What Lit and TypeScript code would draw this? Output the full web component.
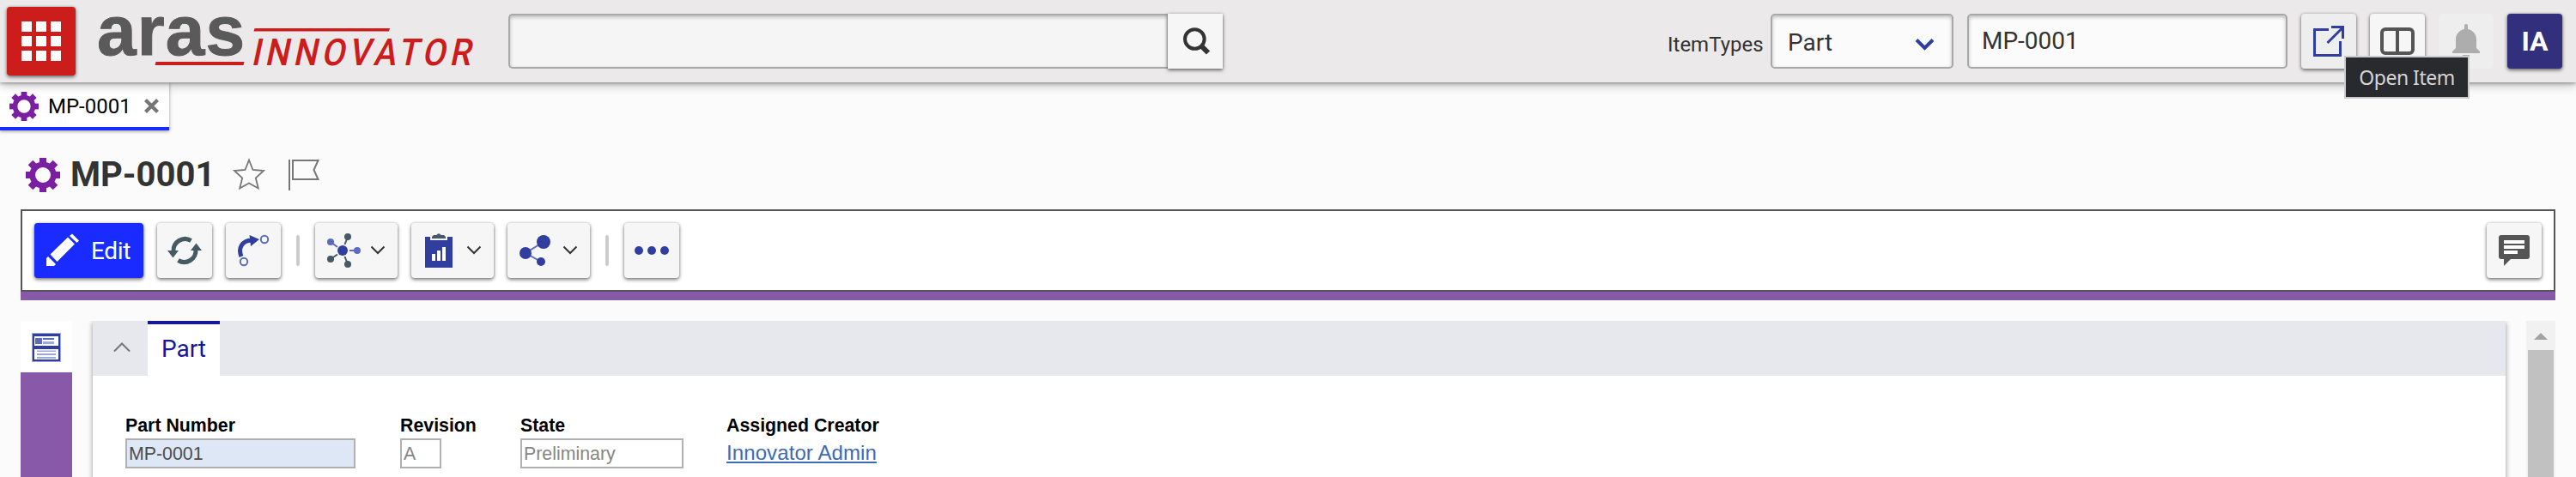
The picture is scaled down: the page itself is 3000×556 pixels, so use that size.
import { LitElement, html, css, svg } from "lit";
import { customElement } from "lit/decorators.js";

const gear = (size: number) => html`<svg width=${size} height=${size} viewBox="-20 -20 40 40">
  <g fill="#7b1fa2">
    ${[0, 45, 90, 135, 180, 225, 270, 315].map(
      (a) => svg`<rect x="-4" y=${a % 90 ? -20.5 : -20} width="8" height="10" transform="rotate(${a})"></rect>`
    )}
  </g>
  <circle r="12.3" fill="none" stroke="#7b1fa2" stroke-width="6.6"></circle>
</svg>`;

const chevron = svg`<path d="M65.5 27.5 73 35 80.5 27.5" fill="none" stroke="#333" stroke-width="2"></path>`;

@customElement("app-root")
export class AppRoot extends LitElement {
  static styles = css`
    :host {
      display: block;
      width: 3000px;
      height: 556px;
      overflow: hidden;
      background: #fbfbfb;
      font-family: Roboto, "Liberation Sans", sans-serif;
      color: #333;
    }
    * { box-sizing: border-box; }
    svg { display: block; flex: none; }
    .header {
      position: relative;
      z-index: 1;
      display: flex;
      align-items: center;
      height: 96px;
      padding: 0 16px 0 8px;
      background: #ebe9ea;
      box-shadow: 0 1px 4px rgba(0, 0, 0, 0.35), 0 2px 12px rgba(0, 0, 0, 0.3);
    }
    .btn {
      flex: none;
      height: 64px;
      border-radius: 4px;
      background: #f6f6f6;
      box-shadow: 0 2px 4px rgba(0, 0, 0, 0.5), 0 0 3px rgba(0, 0, 0, 0.22);
    }
    .menu {
      width: 80px;
      height: 80px;
      background: #cc1c1c;
    }
    .logo { margin-left: 20px; overflow: visible; }
    .field {
      height: 64px;
      border: 2px solid #a8a8a8;
      border-radius: 5px;
      background: #fbfbfb;
      box-shadow: inset 0 2px 4px rgba(0, 0, 0, 0.25);
      font-size: 28px;
      line-height: 60px;
    }
    .search {
      width: 768px;
      margin-left: 34px;
      border-right: 0;
      border-radius: 5px 0 0 5px;
      background: #f5f5f5;
    }
    .find { border-radius: 0; }
    .itemtypes {
      margin-left: auto;
      width: 120px;
      padding-top: 8px;
      font-size: 24px;
      line-height: 28px;
    }
    .select {
      display: flex;
      justify-content: space-between;
      width: 213px;
      padding: 2px 18px 0 18px;
    }
    .item {
      width: 373px;
      margin: 0 16px;
      padding-left: 15px;
    }
    .actions { display: flex; gap: 16px; }
    .open { background: #eeeeee; }
    .bell { background: #eeeeee; box-shadow: none; }
    .user {
      width: 64px;
      background: #32307c;
      color: #fff;
      font-weight: 700;
      font-size: 32px;
      line-height: 64px;
      text-align: center;
    }
    .tooltip {
      position: absolute;
      left: 2730px;
      top: 65px;
      width: 146px;
      height: 50px;
      border: 2px solid #cccbcf;
      background: #292a2d;
      color: #d5d5d5;
      font: 23px/46px "Noto Sans", sans-serif;
      letter-spacing: -0.5px;
      text-align: center;
      white-space: nowrap;
    }
    .tab {
      display: flex;
      align-items: center;
      width: 197px;
      height: 56px;
      padding: 0 11px;
      border-bottom: 4px solid #1a2bff;
      background: #fff;
      box-shadow: 0 1px 4px rgba(0, 0, 0, 0.4);
    }
    .tab-icon { padding-top: 4px; }
    .tab-text {
      width: 112px;
      margin-left: 11px;
      padding-top: 4px;
      font-size: 24px;
      line-height: 28px;
      color: #000;
    }
    .title {
      display: flex;
      align-items: center;
      height: 92px;
      padding: 12px 30px 0;
    }
    h1 {
      width: 187px;
      margin: 0 0 0 12px;
      font-size: 40px;
      line-height: 80px;
      font-weight: 700;
    }
    .toolbar {
      display: flex;
      align-items: center;
      gap: 16px;
      height: 96px;
      margin: 0 24px;
      padding: 0 14px;
      border: 2px solid #555;
      background: #fff;
    }
    .stripe { height: 10px; margin: 0 24px; background: #8858a9; }
    .edit {
      display: flex;
      width: 127px;
      background: #1a2bff;
      color: #fff;
      font-size: 28px;
      line-height: 65px;
      letter-spacing: -0.3px;
    }
    .sep {
      width: 4px;
      height: 36px;
      margin: 0 2px;
      border-radius: 2px;
      background: #ccc;
    }
    .comment { margin-left: auto; }
    .body {
      display: flex;
      height: 182px;
      margin: 24px 24px 0;
    }
    .side { width: 60px; background: #8858a9; }
    .side-item { display: flex; height: 60px; padding: 14px 13px; background: #fff; }
    .clip { flex: 1; padding: 0 24px; overflow: hidden; }
    .panel {
      height: 190px;
      background: #fff;
      box-shadow: 0 2px 6px rgba(0, 0, 0, 0.4);
    }
    .panel-head { display: flex; height: 64px; background: #e7e8ed; }
    .panel-tab {
      width: 84px;
      border-top: 4px solid #17179b;
      background: #fff;
      color: #17179b;
      font-size: 28px;
      line-height: 57px;
      text-align: center;
    }
    .form {
      display: flex;
      align-items: flex-start;
      padding: 45px 38px 0;
      font: 21.33px/24px "Liberation Sans", Arial, sans-serif;
    }
    .label { height: 28px; padding-top: 1px; font-weight: 700; color: #000; white-space: nowrap; }
    .value {
      height: 35px;
      padding-left: 2px;
      border: 2px solid #b0b0b0;
      color: #868686;
      line-height: 32px;
    }
    .number { width: 268px; margin-right: 52px; }
    .number .value { background: #dde7f5; color: #4c4c4c; }
    .revision { width: 48px; margin-right: 92px; }
    .state { width: 190px; margin-right: 50px; }
    .link {
      display: inline-block;
      font-size: 24px;
      line-height: 33px;
      letter-spacing: 0.1px;
      color: #3c6ab8;
      text-decoration: underline;
      text-decoration-thickness: 2px;
      text-underline-offset: 2px;
    }
    .scroll {
      display: flex;
      flex-direction: column;
      width: 34px;
      padding: 0 2px;
      background: #f1f1f1;
    }
    .thumb { flex: 1; background: #c1c1c1; }
  `;

  render() {
    return html`
      <div class="header">
        <div class="btn menu">
          <svg width="80" height="80" fill="#fff">
            ${[17, 34, 51].map((y) => [17, 34, 51].map((x) => svg`<rect x=${x} y=${y} width="12" height="12"></rect>`))}
          </svg>
        </div>
        <svg class="logo" width="450" height="96">
          <text x="5" y="63.500" font-family="Liberation Sans" font-weight="700" font-size="82" fill="#5a5a5a" stroke="#5a5a5a" textLength="172">aras</text>
          <path d="M73.500 72H176.500L175.500 76H72.500ZM188.500 33H346L345 36.500H187.500Z" fill="#cc1c1c"></path>
          <text transform="translate(184 76) skewX(-12) scale(.9 1)" x="0" y="0" font-family="Roboto" font-weight="500" font-size="43.500" letter-spacing="5.600" fill="#cc1c1c">INNOVATOR</text>
        </svg>
        <div class="field search"></div>
        <div class="btn find">
          <svg width="64" height="64">
            <circle cx="31.300" cy="29.500" r="11.300" fill="none" stroke="#333" stroke-width="4"></circle>
            <path d="M39 37.500 47 45.500" stroke="#333" stroke-width="6"></path>
          </svg>
        </div>
        <div class="itemtypes">ItemTypes</div>
        <div class="field select">
          <span>Part</span>
          <svg width="26" height="58"><path d="M3 26.500 12.500 36 22 26.500" fill="none" stroke="#303f9f" stroke-width="4"></path></svg>
        </div>
        <div class="field item">MP-0001</div>
        <div class="actions">
          <div class="btn open">
            <svg width="64" height="64" fill="none" stroke="#303f9f" stroke-width="3">
              <path d="M32 18.500H15.500V48.500H45.500V32M35 15.500H48.500V29"></path>
              <path d="M30.500 34 48 16.500"></path>
            </svg>
          </div>
          <div class="btn">
            <svg width="64" height="64" fill="none" stroke="#555" stroke-width="4">
              <rect x="14" y="18" width="36" height="28" rx="4"></rect>
              <path d="M32 18V46"></path>
            </svg>
          </div>
          <div class="btn bell">
            <svg width="64" height="64" fill="#adadad">
              <path d="M30 14a2 2 0 0 1 4 0V18C40 19 44 24 44 30V40L48 44V46H16V44L20 40V30C20 24 24 19 30 18ZM28 48H36A4 4 0 0 1 28 48Z"></path>
            </svg>
          </div>
          <div class="btn user">IA</div>
        </div>
        <div class="tooltip">Open Item</div>
      </div>

      <div class="tab">
        <div class="tab-icon">${gear(34)}</div>
        <div class="tab-text">MP-0001</div>
        <svg width="20" height="24"><path d="M3.500 6.500 17.500 20.500M17.500 6.500 3.500 20.500" stroke="#767676" stroke-width="4.200"></path></svg>
      </div>

      <div class="title">
        ${gear(40)}
        <h1>MP-0001</h1>
        <svg width="120" height="60" fill="none" stroke="#777" stroke-width="1.800">
          <path d="M21 12.500 25.500 24 38 25 28.800 33.500 31.800 45.500 21 39.500 10.200 45.500 13.200 33.500 4 25 16.500 24Z"></path>
          <path d="M68 12V48" stroke-width="2"></path>
          <path d="M72 13H101.500L96.500 24 101.500 35H72Z" stroke-width="2"></path>
        </svg>
      </div>

      <div class="toolbar">
        <div class="btn edit">
          <svg width="66" height="64" fill="#fff">
            <path d="M18.500 36.500 39 16.500 47 24.500 26.500 45ZM41 15 44 12.500 52 20.500 49.500 23Z"></path>
            <path d="M14 50V41L16 39 25 48 23 50Z"></path>
          </svg>
          <span>Edit</span>
        </div>
        <div class="btn">
          <svg width="64" height="64" fill="none" stroke="#455a64" stroke-width="5">
            <path d="M39.500 20.500A13.500 13.500 0 0 0 19 33"></path>
            <path d="M24.500 43.500A13.500 13.500 0 0 0 45 31"></path>
            <path d="M12 32H25L18.500 40.500ZM39 32H52L45.500 23.500Z" fill="#455a64" stroke="none"></path>
          </svg>
        </div>
        <div class="btn">
          <svg width="64" height="64" fill="none" stroke="#5c6bc0" stroke-width="2">
            <path d="M18 39C14 29 19 20.500 30 20" stroke="#303f9f" stroke-width="5"></path>
            <path d="M27.500 14 39 19 29 27Z" fill="#303f9f" stroke="none"></path>
            <circle cx="45" cy="19" r="4.200"></circle>
            <circle cx="21" cy="45" r="4.200"></circle>
          </svg>
        </div>
        <div class="sep"></div>
        <div class="btn">
          <svg width="96" height="64">
            <path d="M18 22 26 28M40 32H48" stroke="#5c6bc0" stroke-width="2"></path>
            <path d="M18 42 26 36.500M38 16 34.500 25M38 48 34.500 39" stroke="#455a64" stroke-width="2"></path>
            <circle cx="32" cy="32" r="6" fill="#303f9f"></circle>
            <g fill="#5c6bc0"><circle cx="18" cy="22" r="4"></circle><circle cx="49" cy="32" r="4"></circle></g>
            <g fill="#455a64"><circle cx="38" cy="16" r="4"></circle><circle cx="18" cy="42" r="4"></circle><circle cx="38" cy="48" r="4"></circle></g>
            ${chevron}
          </svg>
        </div>
        <div class="btn">
          <svg width="96" height="64">
            <path d="M16 16H22V20H42V16H48V52H16Z" fill="#303f9f"></path>
            <path d="M24 18V16L26 14H29.500A2.700 2.700 0 0 1 34.500 14H38L40 16V18Z" fill="#455a64"></path>
            <path d="M24 36H28V44H24ZM30 32H34V44H30ZM36 28H40V44H36Z" fill="#fff"></path>
            ${chevron}
          </svg>
        </div>
        <div class="btn">
          <svg width="96" height="64">
            <path d="M42 22 21 35 39 45" fill="none" stroke="#5c6bc0" stroke-width="2"></path>
            <g fill="#303f9f"><circle cx="42" cy="22" r="8"></circle><circle cx="21" cy="35" r="7"></circle><circle cx="39" cy="45" r="5"></circle></g>
            ${chevron}
          </svg>
        </div>
        <div class="sep"></div>
        <div class="btn">
          <svg width="64" height="64" fill="#303f9f"><circle cx="17" cy="32" r="5"></circle><circle cx="32" cy="32" r="5"></circle><circle cx="47" cy="32" r="5"></circle></svg>
        </div>
        <div class="btn comment">
          <svg width="64" height="64">
            <path d="M17 14H47A3 3 0 0 1 50 17V39A3 3 0 0 1 47 42H28L20 50V42H17A3 3 0 0 1 14 39V17A3 3 0 0 1 17 14Z" fill="#555"></path>
            <path d="M20 20H44V24H20ZM20 26H44V30H20ZM20 32H36V36H20Z" fill="#fff"></path>
          </svg>
        </div>
      </div>
      <div class="stripe"></div>

      <div class="body">
        <div class="side">
          <div class="side-item">
            <svg width="34" height="34">
              <rect x=".5" y=".5" width="33" height="33" fill="#303f9f" stroke="#9fa8da"></rect>
              <path d="M3 4H31V15H3ZM3 19H31V31H3Z" fill="#fff"></path>
              <path d="M4 6H12V13H4ZM13 6H26V8H13Z" fill="#5c6bc0"></path>
              <path d="M13 10H26V13H13ZM6 20.500H28V22H6ZM6 24H28V26H6ZM6 28H28V30H6Z" fill="#9fa8da"></path>
            </svg>
          </div>
        </div>
        <div class="clip">
          <div class="panel">
            <div class="panel-head">
              <svg width="64" height="64"><path d="M25 35.500 34 26.500 43 35.500" fill="none" stroke="#777" stroke-width="2"></path></svg>
              <div class="panel-tab">Part</div>
            </div>
            <div class="form">
              <div class="number"><div class="label">Part Number</div><div class="value">MP-0001</div></div>
              <div class="revision"><div class="label">Revision</div><div class="value">A</div></div>
              <div class="state"><div class="label">State</div><div class="value">Preliminary</div></div>
              <div><div class="label">Assigned Creator</div><div class="link">Innovator Admin</div></div>
            </div>
          </div>
        </div>
        <div class="scroll">
          <svg width="30" height="34"><path d="M7 22 15 14 23 22Z" fill="#a3a3a3"></path></svg>
          <div class="thumb"></div>
        </div>
      </div>
    `;
  }
}
